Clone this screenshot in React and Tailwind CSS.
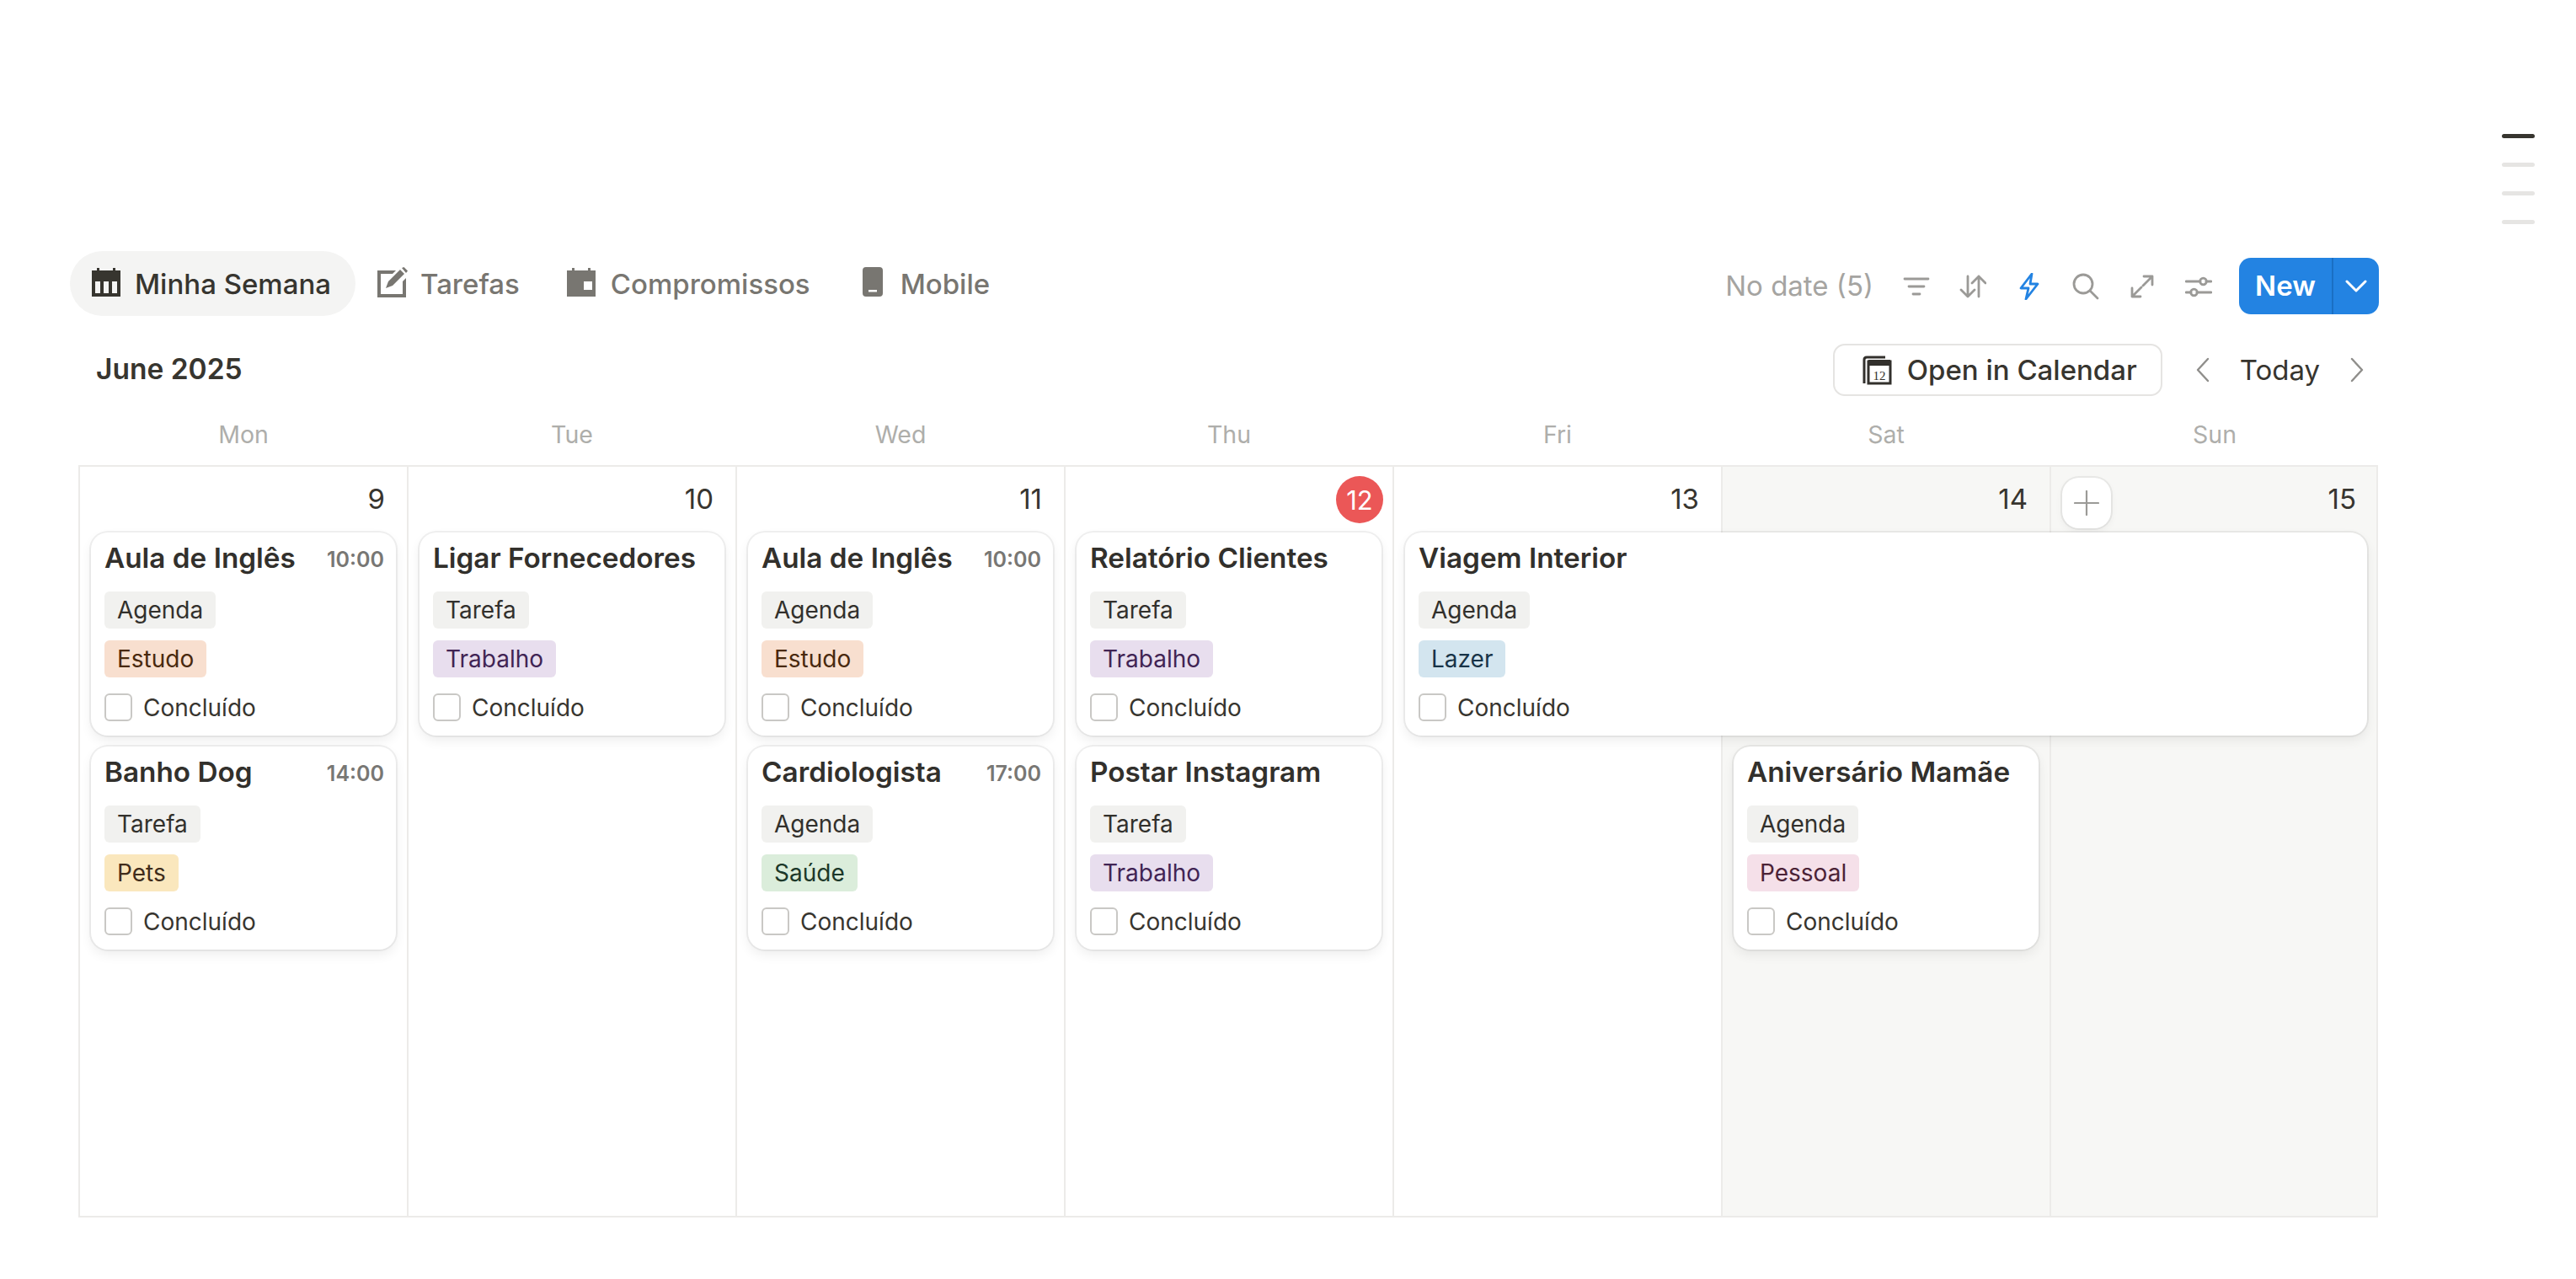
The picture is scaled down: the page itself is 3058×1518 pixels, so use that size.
import React from "react";

const F = { fontFamily: 'Inter, "Liberation Sans", sans-serif' };

const TAGS = {
  Agenda: "bg-[#f1f1ef] text-[#32302c]",
  Tarefa: "bg-[#f1f1ef] text-[#32302c]",
  Estudo: "bg-[#f8dfcf] text-[#49290e]",
  Trabalho: "bg-[#e8deee] text-[#412454]",
  Pets: "bg-[#fae7bd] text-[#402c1b]",
  "Saúde": "bg-[#dbeddb] text-[#1c3829]",
  Lazer: "bg-[#d3e5ef] text-[#183347]",
  Pessoal: "bg-[#f5e0e9] text-[#4c2337]",
};

function Tag({ name }) {
  return (
    <div className={`flex h-[44px] w-fit items-center rounded-[6px] px-[15px] text-[28px] leading-none ${TAGS[name]}`}>
      {name}
    </div>
  );
}

function Card({ title, time, tags, placement }) {
  return (
    <div className={`z-10 ml-[15px] mr-[13px] flex h-[241px] flex-col rounded-[20px] bg-white pl-[16px] pr-[14px] pt-[7px] shadow-[0_0_0_2px_rgba(15,15,15,0.06),0_6px_14px_rgba(15,15,15,0.07)] ${placement}`}>
      <div className="flex h-[47px] items-center justify-between">
        <span className="text-[33.3px] font-semibold leading-none text-[#32302c]">{title}</span>
        {time && <span className="pt-[4px] text-[25px] font-semibold leading-none text-[#787774]">{time}</span>}
      </div>
      <div className="mt-[16px] flex flex-col gap-[14px]">
        {tags.map((t) => <Tag key={t} name={t} />)}
      </div>
      <div className="mt-[19px] flex items-center gap-[13px]">
        <div className="h-[33px] w-[33px] rounded-[6px] border-2 border-[#c9c8c5] bg-white" />
        <span className="text-[28px] leading-none text-[#37352f]">Concluído</span>
      </div>
    </div>
  );
}

const CalWeek = ({ c }) => (
  <svg width="34" height="34" viewBox="0 0 34 34" fill={c}>
    <rect x="6" y="0" width="3" height="5" /><rect x="25" y="0" width="3" height="5" />
    <path fillRule="evenodd" d="M0 3h34v31H0z M4 16v14h6V16z M14 16v14h6V16z M24 16v14h6V16z" />
  </svg>
);
const Edit = ({ c }) => (
  <svg width="36" height="36" viewBox="0 0 36 36" fill={c}>
    <path d="M0 4h22l-4 4H4v24h26V17l4-4v23H0z" />
    <path d="M10 25l3-8L27 3l5 5-14 14z" />
    <path d="M29 1l2.500-1L36 4.500 34 7z" />
  </svg>
);
const CalDay = ({ c }) => (
  <svg width="34" height="34" viewBox="0 0 34 34" fill={c}>
    <rect x="6" y="0" width="3" height="5" /><rect x="25" y="0" width="3" height="5" />
    <path fillRule="evenodd" d="M0 3h34v31H0z M20 16v10h10V16z" />
  </svg>
);
const Phone = ({ c }) => (
  <svg width="24" height="35" viewBox="0 0 24 35" fill={c}>
    <path fillRule="evenodd" d="M4 0h16a4 4 0 0 1 4 4v27a4 4 0 0 1-4 4H4a4 4 0 0 1-4-4V4a4 4 0 0 1 4-4z M7 27v2.500h10V27z" />
  </svg>
);

function TabItem({ icon, label, active, className }) {
  return (
    <div className={`flex h-[77px] items-center rounded-full text-[33px] font-medium leading-none ${active ? "bg-[#f4f4f3] text-[#37352f]" : "text-[#787671]"} ${className}`}>
      <span className="-mt-[4px] flex">{icon}</span>
      <span className="pt-[2px]">{label}</span>
    </div>
  );
}

const ToolIcon = ({ children, color = "#9b9a97" }) => (
  <svg width="32" height="32" viewBox="0 0 32 32" fill="none" stroke={color} strokeWidth="2.800" strokeLinecap="round" strokeLinejoin="round">
    {children}
  </svg>
);

const Chevron = ({ dir }) => (
  <svg width="18" height="30" viewBox="0 0 18 30" fill="none" stroke="#8f8e8b" strokeWidth="2.400" strokeLinecap="round" strokeLinejoin="round">
    <path d={dir === "l" ? "M15 2L3 15l12 13" : "M3 2l12 13L3 28"} />
  </svg>
);

const DAYS = ["Mon", "Tue", "Wed", "Thu", "Fri", "Sat", "Sun"];

function Cell({ col, shade, last }) {
  return (
    <div className={`row-start-1 row-end-5 ${col} border-l-2 border-[#ecebe9] ${shade ? "bg-[#f7f7f5]" : "bg-white"} ${last ? "border-r-2" : ""}`} />
  );
}

function Num({ n, col }) {
  return (
    <div className={`row-start-1 ${col} z-10 flex h-[76px] items-center justify-end pr-[26px] text-[33px] leading-none text-[#37352f]`}>
      {n}
    </div>
  );
}

export default function App() {
  return (
    <div style={F} className="relative h-[1518px] w-full overflow-hidden bg-white">
      <div className="absolute left-[2970px] top-[159px] flex w-[39px] flex-col gap-[29px]">
        <div className="h-[5px] rounded-full bg-[#37352f]" />
        <div className="h-[5px] rounded-full bg-[#e6e5e3]" />
        <div className="h-[5px] rounded-full bg-[#e6e5e3]" />
        <div className="h-[5px] rounded-full bg-[#e6e5e3]" />
      </div>

      <div className="ml-[83px] w-[2741px] pt-[298px]">
        {/* tabs + tools */}
        <div className="flex h-[77px] items-center justify-between">
          <div className="flex items-center">
            <TabItem active label="Minha Semana" className="w-[339px] gap-[17px] pl-[26px]" icon={<CalWeek c="#37352f" />} />
            <TabItem label="Tarefas" className="ml-[26px] gap-[15px]" icon={<Edit c="#787671" />} />
            <TabItem label="Compromissos" className="ml-[56px] gap-[18px]" icon={<CalDay c="#787671" />} />
            <TabItem label="Mobile" className="ml-[62px] gap-[21px]" icon={<Phone c="#787671" />} />
          </div>
          <div className="flex items-center pt-[6px]">
            <span className="mr-[35px] text-[33px] leading-none text-[#a5a4a1]">No date (5)</span>
            <div className="flex items-center gap-[35px]">
              <ToolIcon><path d="M2 7h28M7 16h18M12 25h8" /></ToolIcon>
              <ToolIcon>
                <path d="M10 4v24M2 20l8 8 8-8M23 28V4M15 12l8-8 8 8" />
              </ToolIcon>
              <ToolIcon color="#2383e2"><path d="M19 1L6 18h9l-3 13 14-18h-9z" /></ToolIcon>
              <ToolIcon><circle cx="13" cy="13" r="11" /><path d="M21 21l9 9" /></ToolIcon>
              <ToolIcon><path d="M18 4h10v10M28 4L17 15M4 18v10h10M4 28l11-11" /></ToolIcon>
              <ToolIcon>
                <path d="M1 10h17M25 10h6M1 23h6M14 23h17" />
                <circle cx="21.500" cy="10" r="3.800" /><circle cx="10.500" cy="23" r="3.800" />
              </ToolIcon>
            </div>
            <div className="ml-[32px] flex h-[67px] w-[166px] items-stretch overflow-hidden rounded-[14px] bg-[#2383e2] text-white">
              <div className="flex w-[110px] items-center justify-center text-[33px] font-semibold leading-none">New</div>
              <div className="flex flex-1 items-center justify-center border-l-2 border-[#1a6fc4]">
                <svg width="26" height="16" viewBox="0 0 26 16" fill="none" stroke="#fff" strokeWidth="3" strokeLinecap="round" strokeLinejoin="round"><path d="M2 2l11 11L24 2" /></svg>
              </div>
            </div>
          </div>
        </div>

        {/* month row */}
        <div className="mt-[33px] flex h-[62px] items-center justify-between pl-[31px] pr-[17px]">
          <span className="text-[33.5px] font-semibold leading-none text-[#37352f]">June 2025</span>
          <div className="flex items-center">
            <div className="flex h-[62px] w-[391px] items-center gap-[18px] rounded-[14px] border-2 border-[#e5e4e2] pl-[32px] text-[33px] font-medium leading-none text-[#37352f]">
              <svg width="36" height="36" viewBox="0 0 36 36" fill="none">
                <path d="M3 34V6q0-3 3-3h22" stroke="#32302c" strokeWidth="3" />
                <path d="M8 34V8h26v26z" stroke="#32302c" strokeWidth="3" />
                <rect x="8" y="6" width="26" height="7" fill="#32302c" />
                <text x="21" y="30" textAnchor="middle" fontSize="15" fontWeight="500" fill="#32302c" fontFamily="Liberation Serif, serif">12</text>
              </svg>
              <span>Open in Calendar</span>
            </div>
            <div className="ml-[39px] flex items-center">
              <Chevron dir="l" />
              <span className="ml-[35px] text-[33px] font-normal leading-none text-[#37352f]">Today</span>
              <span className="ml-[35px]"><Chevron dir="r" /></span>
            </div>
          </div>
        </div>

        {/* weekday header */}
        <div className="ml-[11px] mt-[24px] grid h-[44px] grid-cols-7 items-center">
          {DAYS.map((d) => (
            <div key={d} className="text-center text-[28.5px] leading-none text-[#aeaeab]">{d}</div>
          ))}
        </div>

        {/* week grid */}
        <div className="ml-[10px] mr-[1px] mt-[14px] grid h-[893px] grid-cols-7 grid-rows-[78px_254px_241px_1fr] border-b-2 border-t-2 border-[#ecebe9]">
          <Cell col="col-start-1" />
          <Cell col="col-start-2" />
          <Cell col="col-start-3" />
          <Cell col="col-start-4" />
          <Cell col="col-start-5" />
          <Cell col="col-start-6" shade />
          <Cell col="col-start-7" shade last />

          <Num n="9" col="col-start-1" />
          <Num n="10" col="col-start-2" />
          <Num n="11" col="col-start-3" />
          <div className="col-start-4 row-start-1 z-10 flex h-[78px] items-center justify-end pr-[11px]">
            <div className="flex h-[56px] w-[56px] items-center justify-center rounded-full bg-[#eb5757] text-[31px] leading-none text-white">12</div>
          </div>
          <Num n="13" col="col-start-5" />
          <Num n="14" col="col-start-6" />
          <div className="col-start-7 row-start-1 z-10 flex h-[76px] items-center justify-between pl-[15px] pr-[26px] text-[33px] leading-none text-[#37352f]">
            <div className="mt-[10px] flex h-[60px] w-[58px] items-center justify-center rounded-[20px] bg-white shadow-[0_0_0_2px_rgba(15,15,15,0.06),0_4px_10px_rgba(15,15,15,0.05)]">
              <svg width="30" height="30" viewBox="0 0 30 30" fill="none" stroke="#9b9a97" strokeWidth="2.200" strokeLinecap="round"><path d="M15 1v28M1 15h28" /></svg>
            </div>
            <span>15</span>
          </div>

          <Card placement="col-start-1 row-start-2" title="Aula de Inglês" time="10:00" tags={["Agenda", "Estudo"]} />
          <Card placement="col-start-2 row-start-2" title="Ligar Fornecedores" tags={["Tarefa", "Trabalho"]} />
          <Card placement="col-start-3 row-start-2" title="Aula de Inglês" time="10:00" tags={["Agenda", "Estudo"]} />
          <Card placement="col-start-4 row-start-2" title="Relatório Clientes" tags={["Tarefa", "Trabalho"]} />
          <Card placement="col-start-5 col-end-8 row-start-2" title="Viagem Interior" tags={["Agenda", "Lazer"]} />

          <Card placement="col-start-1 row-start-3" title="Banho Dog" time="14:00" tags={["Tarefa", "Pets"]} />
          <Card placement="col-start-3 row-start-3" title="Cardiologista" time="17:00" tags={["Agenda", "Saúde"]} />
          <Card placement="col-start-4 row-start-3" title="Postar Instagram" tags={["Tarefa", "Trabalho"]} />
          <Card placement="col-start-6 row-start-3" title="Aniversário Mamãe" tags={["Agenda", "Pessoal"]} />
        </div>
      </div>
    </div>
  );
}
